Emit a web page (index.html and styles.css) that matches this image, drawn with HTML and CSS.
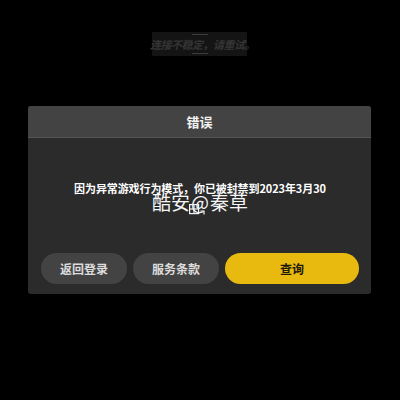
FILE: index.html
```html
<html>
  <head>
    <link rel="stylesheet" href="styles.css">
  </head>
  <body>
    <div class="toast">
      <span class="toast-line top"></span>
      <span class="toast-text">连接不稳定，请重试。</span>
      <span class="toast-line bottom"></span>
    </div>
    <div class="dialog">
      <div class="dialog-title">错误</div>
      <div class="dialog-body">
        <div class="message">因为异常游戏行为模式，你已被封禁到2023年3月30</div>
        <div class="buttons">
          <div class="btn gray small">返回登录</div>
          <div class="btn gray small">服务条款</div>
          <div class="btn yellow">查询</div>
        </div>
      </div>
    </div>
    <div class="watermark">
      <span>酷安</span><span class="at">@</span><span>秦草</span>
      <svg class="mark" width="17" height="12" viewBox="0 0 17 12">
        <rect x="0.6" y="0.6" width="9" height="9" fill="none" stroke="#f4f4f4" stroke-width="1.2"/>
        <line x1="0.6" y1="5" x2="9.6" y2="5" stroke="#f4f4f4" stroke-width="1.2"/>
        <line x1="5" y1="0.6" x2="5" y2="9.6" stroke="#f4f4f4" stroke-width="1.2"/>
        <path d="M11.5 7 L15 7 L15 10.5" fill="none" stroke="#f4f4f4" stroke-width="1.2"/>
      </svg>
    </div>
  </body>
</html>
```

FILE: styles.css
```css
body { margin:0;background-color:#000;font-family:"Noto Sans CJK SC","Noto Sans",sans-serif;position:relative;height:400px;overflow:hidden; }
.toast { margin:32px 0 0 152px;width:95px;height:24px;background-color:#141414;position:relative;display:flex;align-items:center;justify-content:center; }
.toast-text { font-size:11px;font-weight:bold;font-style:italic;color:#343434;white-space:nowrap;letter-spacing:-0.5px;margin-left:6px; }
.toast-line { position:absolute;left:40px;width:16px;height:1px;background-color:#3c3c3c; }
.toast-line.top { top:2px; }
.toast-line.bottom { bottom:2px; }
.dialog { margin:50px 0 0 28px;width:343px;height:188px;border-radius:3px;overflow:hidden;background-color:#2b2b2b;display:flex;flex-direction:column; }
.dialog-title { height:30px;background-color:#434343;border-bottom:1px solid #565656;color:#f2f2f2;font-size:13px;font-weight:bold;display:flex;align-items:center;justify-content:center;padding-bottom:1px; }
.dialog-body { flex:1;display:flex;flex-direction:column;padding:0 12px 10px 13px; }
.message { margin-top:42px;height:16px;line-height:16px;font-size:11px;font-weight:bold;color:#fff;text-align:center;white-space:nowrap;letter-spacing:-0.1px; }
.buttons { margin-top:auto;display:flex;gap:6px; }
.btn { height:31px;border-radius:16px;display:flex;align-items:center;justify-content:center;font-size:12px;font-weight:bold; }
.btn.small { width:86px; }
.btn.gray { background-color:#434343;color:#dcdcdc; }
.btn.yellow { flex:1;background-color:#e8b90f;color:#1e1a0a; }
.watermark { position:absolute;left:152px;top:190px;display:flex;color:#f6f6f6;font-size:19px;line-height:24px; }
.watermark .at { display:inline-block;width:20px;text-align:center; }
.watermark .mark { position:absolute;left:37px;top:14px; }
```
